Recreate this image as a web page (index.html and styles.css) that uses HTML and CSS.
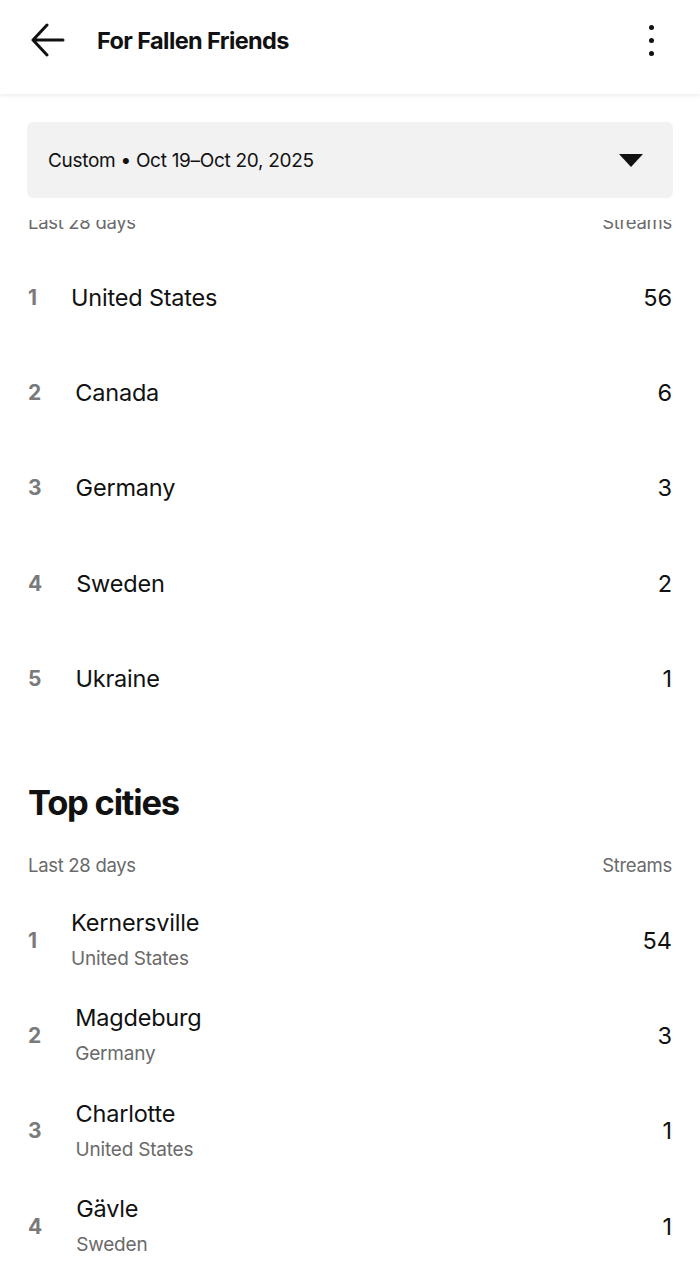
FILE: index.html
```html
<!DOCTYPE html>
<html lang="en">
<head>
<meta charset="utf-8">
<title>For Fallen Friends</title>
<link rel="stylesheet" href="styles.css">
</head>
<body>
<div class="app">
  <header class="topbar">
    <button class="icon-btn back" aria-label="Back">
      <svg width="34" height="34" viewBox="0 0 34 34" fill="none" stroke="#111" stroke-width="3" stroke-linecap="round" stroke-linejoin="round">
        <path d="M32 17H2M16 2L2 17l14 15"/>
      </svg>
    </button>
    <h1 class="title">For Fallen Friends</h1>
    <button class="icon-btn more" aria-label="More">
      <span class="dot"></span><span class="dot"></span><span class="dot"></span>
    </button>
  </header>

  <div class="filter-area">
    <div class="dropdown">
      <span class="dropdown-text">Custom • Oct 19–Oct 20, 2025</span>
      <span class="caret"></span>
    </div>
  </div>

  <div class="viewport">
    <div class="scroll-content">
      <section class="section countries">
        <div class="list-head"><span>Last 28 days</span><span>Streams</span></div>
        <ol class="rank-list">
          <li class="row"><span class="rank">1</span><span class="name">United States</span><span class="value">56</span></li>
          <li class="row"><span class="rank">2</span><span class="name">Canada</span><span class="value">6</span></li>
          <li class="row"><span class="rank">3</span><span class="name">Germany</span><span class="value">3</span></li>
          <li class="row"><span class="rank">4</span><span class="name">Sweden</span><span class="value">2</span></li>
          <li class="row"><span class="rank">5</span><span class="name">Ukraine</span><span class="value">1</span></li>
        </ol>
      </section>

      <section class="section cities">
        <h2 class="section-title">Top cities</h2>
        <div class="list-head"><span>Last 28 days</span><span>Streams</span></div>
        <ol class="rank-list">
          <li class="row"><span class="rank">1</span><span class="name-block"><span class="name">Kernersville</span><span class="sub">United States</span></span><span class="value">54</span></li>
          <li class="row"><span class="rank">2</span><span class="name-block"><span class="name">Magdeburg</span><span class="sub">Germany</span></span><span class="value">3</span></li>
          <li class="row"><span class="rank">3</span><span class="name-block"><span class="name">Charlotte</span><span class="sub">United States</span></span><span class="value">1</span></li>
          <li class="row"><span class="rank">4</span><span class="name-block"><span class="name">Gävle</span><span class="sub">Sweden</span></span><span class="value">1</span></li>
        </ol>
      </section>
    </div>
  </div>
</div>
</body>
</html>
```

FILE: styles.css
```css
* { box-sizing: border-box; }
html, body { margin: 0; padding: 0; }
body {
  background: #ffffff;
  font-family: "Inter", "Liberation Sans", sans-serif;
  color: #111111;
}
.app {
  width: 700px;
  height: 1265px;
  overflow: hidden;
  display: flex;
  flex-direction: column;
}
.topbar {
  height: 94px;
  flex: none;
  display: flex;
  align-items: center;
  padding: 0 30px 14px 30px;
  background: #ffffff;
  box-shadow: 0 2px 4px rgba(0,0,0,0.07);
  position: relative;
  z-index: 2;
}
.icon-btn {
  border: 0;
  background: none;
  padding: 0;
  display: flex;
  cursor: pointer;
}
.back { width: 36px; height: 36px; align-items: center; justify-content: center; }
.title {
  margin: 0 0 0 31px;
  font-size: 23.5px;
  font-weight: 700;
  letter-spacing: -0.6px;
  flex: 1;
}
.more {
  flex-direction: column;
  align-items: center;
  gap: 8px;
  width: 20px;
  margin-right: 9px;
}
.dot { width: 5px; height: 5px; border-radius: 50%; background: #111; }

.filter-area {
  flex: none;
  height: 126px;
  padding: 28px 27px 0 27px;
  background: #ffffff;
}
.dropdown {
  height: 76px;
  background: #f2f2f2;
  border-radius: 6px;
  display: flex;
  align-items: center;
  justify-content: space-between;
  padding: 0 30px 0 21px;
}
.dropdown-text { font-size: 19px; letter-spacing: -0.3px; color: #111; }
.caret {
  width: 0; height: 0;
  border-left: 12px solid transparent;
  border-right: 12px solid transparent;
  border-top: 13px solid #111;
}

.viewport { flex: 1; overflow: hidden; }
.scroll-content { margin-top: -10px; padding: 0 28px; }

.list-head {
  display: flex;
  justify-content: space-between;
  font-size: 18.5px;
  line-height: 24px;
  color: #6a6a6a;
  letter-spacing: -0.3px;
  margin-bottom: 15.5px;
}
.rank-list { list-style: none; margin: 0; padding: 0; }
.row {
  height: 95.3px;
  display: flex;
  align-items: center;
}
.rank {
  font-size: 21px;
  font-weight: 700;
  color: #7a7a7a;
  margin-right: 34px;
}
.name { font-size: 23.5px; letter-spacing: -0.2px; color: #111; }
.name-block { display: flex; flex-direction: column; gap: 10px; flex: 1; }
.name-block .name { line-height: 28px; }
.sub { font-size: 19px; line-height: 24px; color: #6a6a6a; letter-spacing: -0.2px; }
.countries .name { flex: 1; }
.value { font-size: 23.5px; color: #111; }

.countries { margin-bottom: 57px; }
.section-title {
  margin: 0 0 30px 0;
  font-size: 34.5px;
  line-height: 40px;
  font-weight: 700;
  letter-spacing: -1.2px;
}
```
